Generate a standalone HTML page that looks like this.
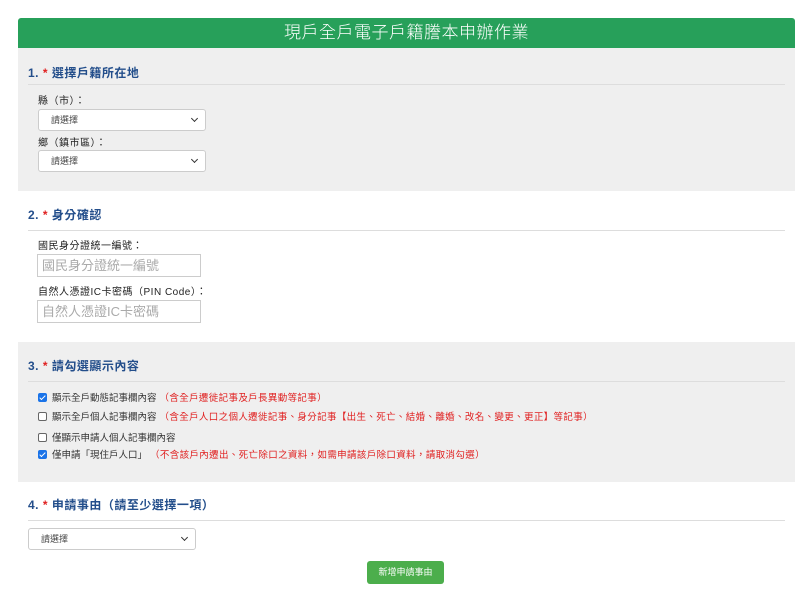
<!DOCTYPE html>
<html><head><meta charset="utf-8"><style>
*{box-sizing:border-box;margin:0;padding:0}
body{width:800px;height:611px;overflow:hidden;background:#fff;font-family:"Liberation Sans","Noto Sans CJK TC",sans-serif;font-size:10px;color:#333}
.wrap{position:absolute;left:18px;width:777px;top:18px}
.hd{height:30px;background:#27a05a;border-radius:3px 3px 0 0;color:#fff;text-align:center;font-size:17px;line-height:30px;letter-spacing:.5px;font-weight:300}
.sec{position:relative}
.gray{background:#efefef}
h2{position:absolute;left:10px;font-size:12px;color:#234e8b;font-weight:bold;letter-spacing:.5px}
h2 b{color:#e02020}
.hr{position:absolute;left:10px;right:10px;height:1px;background:#ddd}
.lbl{position:absolute;font-size:10px;color:#222;letter-spacing:.5px}
.sel{position:absolute;height:22px;background:#fff;border:1px solid #ccc;border-radius:3px;font-size:9px;color:#444;padding-left:12px;line-height:20px}
.sel:after{content:"";position:absolute;right:8px;top:6px;width:4px;height:4px;border-right:1.5px solid #333;border-bottom:1.5px solid #333;transform:rotate(45deg)}
.inp{position:absolute;width:164px;height:23px;border:1px solid #ccc;background:#fff;font-size:13px;color:#aaa;padding-left:4px;line-height:21px}
.cb{position:absolute;left:20px;font-size:9.5px;color:#333;display:flex;align-items:center}
.cb i{display:inline-block;width:9px;height:9px;border:1px solid #666;border-radius:2px;margin-right:5px;background:#fff}
.cb i.on{background:#1a73e8;border-color:#1a73e8;position:relative}
.cb i.on:after{content:"";position:absolute;left:2px;top:0;width:2px;height:5px;border-right:1.5px solid #fff;border-bottom:1.5px solid #fff;transform:rotate(45deg)}
.cb span{color:#e02020;margin-left:3px;letter-spacing:.35px}
.btn{position:absolute;left:349px;top:79px;width:77px;height:23px;background:#4cae4c;color:#fff;border-radius:3px;font-size:9px;text-align:center;line-height:23px}
</style></head><body>
<div class="wrap">
<div class="hd">現戶全戶電子戶籍謄本申辦作業</div>
<div class="sec gray" style="height:143px">
<h2 style="top:16px">1. <b>*</b> 選擇戶籍所在地</h2>
<div class="hr" style="top:36px"></div>
<div class="lbl" style="left:20px;top:44px">縣（市）：</div>
<div class="sel" style="left:20px;top:61px;width:168px">請選擇</div>
<div class="lbl" style="left:20px;top:86px">鄉（鎮市區）：</div>
<div class="sel" style="left:20px;top:102px;width:168px">請選擇</div>
</div>
<div class="sec" style="height:151px">
<h2 style="top:15px">2. <b>*</b> 身分確認</h2>
<div class="hr" style="top:39px"></div>
<div class="lbl" style="left:20px;top:46px">國民身分證統一編號：</div>
<div class="inp" style="left:19px;top:63px">國民身分證統一編號</div>
<div class="lbl" style="left:20px;top:92px">自然人憑證IC卡密碼（PIN Code）：</div>
<div class="inp" style="left:19px;top:109px">自然人憑證IC卡密碼</div>
</div>
<div class="sec gray" style="height:140px">
<h2 style="top:15px">3. <b>*</b> 請勾選顯示內容</h2>
<div class="hr" style="top:39px"></div>
<div class="cb" style="top:48px"><i class="on"></i>顯示全戶動態記事欄內容<span>（含全戶遷徙記事及戶長異動等記事）</span></div>
<div class="cb" style="top:67px"><i></i>顯示全戶個人記事欄內容<span>（含全戶人口之個人遷徙記事、身分記事【出生、死亡、結婚、離婚、改名、變更、更正】等記事）</span></div>
<div class="cb" style="top:88px"><i></i>僅顯示申請人個人記事欄內容</div>
<div class="cb" style="top:105px"><i class="on"></i>僅申請「現住戶人口」<span>（不含該戶內遷出、死亡除口之資料，如需申請該戶除口資料，請取消勾選）</span></div>
</div>
<div class="sec" style="height:129px">
<h2 style="top:14px">4. <b>*</b> 申請事由（請至少選擇一項）</h2>
<div class="hr" style="top:38px"></div>
<div class="sel" style="left:10px;top:46px;width:168px">請選擇</div>
<div class="btn">新增申請事由</div>
</div>
</div>
</body></html>
